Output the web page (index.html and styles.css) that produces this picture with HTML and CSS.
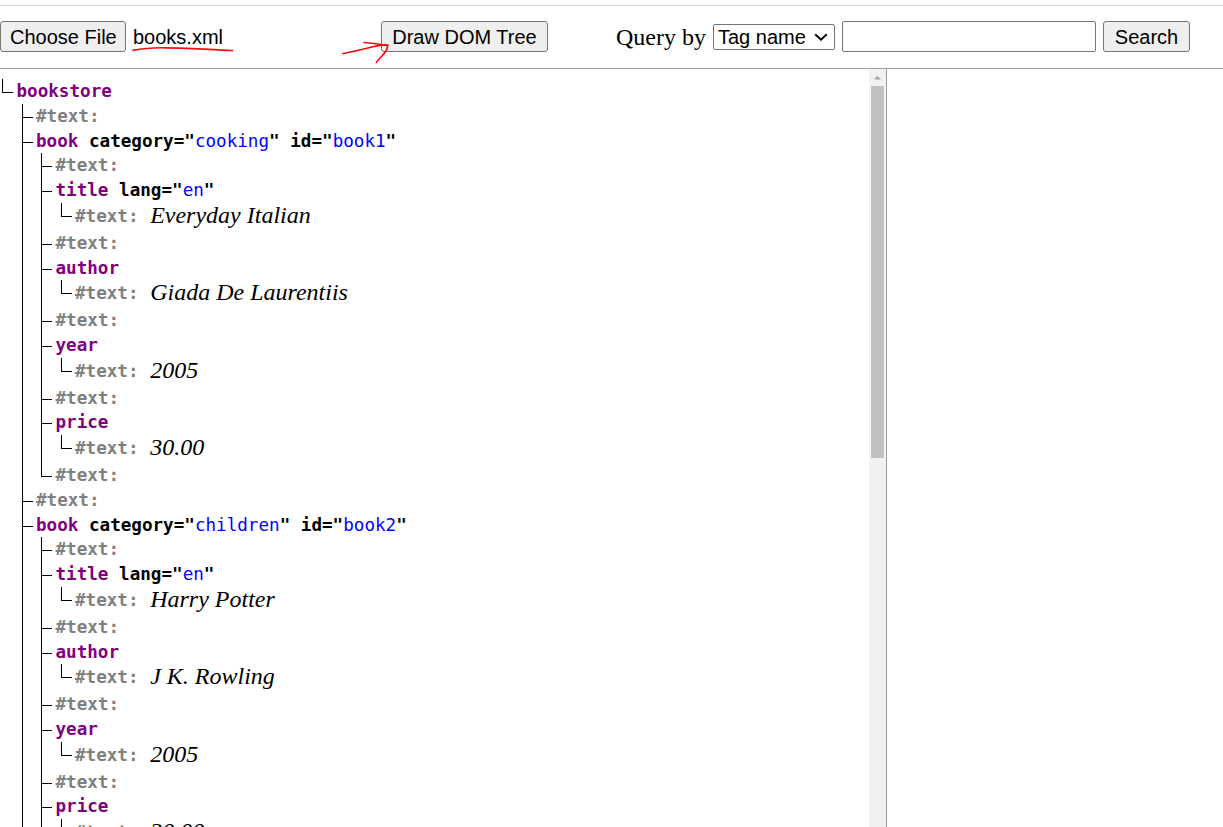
FILE: index.html
```html
<!DOCTYPE html>
<html lang="en">
<head>
<meta charset="utf-8">
<title>DOM Tree</title>
<link rel="stylesheet" href="styles.css">
</head>
<body>
<header class="toolbar">
  <div class="file-group">
    <button class="btn btn-file" type="button">Choose File</button>
    <span class="file-name">books.xml</span>
  </div>
  <button class="btn btn-draw" type="button">Draw DOM Tree</button>
  <label class="query-label" for="qtype">Query by</label>
  <select class="query-select" id="qtype"><option>Tag name</option></select>
  <input class="query-input" type="text" aria-label="query">
  <button class="btn btn-search" type="button">Search</button>
  <svg class="marks" width="400" height="70" viewBox="0 0 400 70" aria-hidden="true">
    <path d="M133 50.3 C 142 48.5, 152 47.6, 165 47.8 S 200 48.6, 214 49.6 S 228 50.4, 232.5 50.6" />
    <path d="M343 53.5 C 352 52, 362 49.5, 372 47 S 383 45, 388 45" />
    <path d="M364 42.5 C 372 43, 380 44, 387.5 45.5 C 388 49, 385 53, 381 57 S 377 61, 376.5 62.5" />
  </svg>
</header>

<main class="workspace">
  <section class="pane">
    <div class="tree-area">
      <ul class="tree root">
        <li class="last">
          <div class="row"><span class="lbl"><b class="t">bookstore</b></span></div>
          <ul class="tree">
            <li><div class="row"><span class="lbl"><b class="x">#text:</b></span></div></li>
            <li>
              <div class="row"><span class="lbl"><b class="t">book</b> <b class="a">category="</b><span class="v">cooking</span><b class="a">" id="</b><span class="v">book1</span><b class="a">"</b></span></div>
              <ul class="tree">
                <li><div class="row"><span class="lbl"><b class="x">#text:</b></span></div></li>
                <li>
                  <div class="row"><span class="lbl"><b class="t">title</b> <b class="a">lang="</b><span class="v">en</span><b class="a">"</b></span></div>
                  <ul class="tree"><li class="last"><div class="row val"><span class="lbl"><b class="x">#text:</b> <i class="s">Everyday Italian</i></span></div></li></ul>
                </li>
                <li><div class="row"><span class="lbl"><b class="x">#text:</b></span></div></li>
                <li>
                  <div class="row"><span class="lbl"><b class="t">author</b></span></div>
                  <ul class="tree"><li class="last"><div class="row val"><span class="lbl"><b class="x">#text:</b> <i class="s">Giada De Laurentiis</i></span></div></li></ul>
                </li>
                <li><div class="row"><span class="lbl"><b class="x">#text:</b></span></div></li>
                <li>
                  <div class="row"><span class="lbl"><b class="t">year</b></span></div>
                  <ul class="tree"><li class="last"><div class="row val"><span class="lbl"><b class="x">#text:</b> <i class="s">2005</i></span></div></li></ul>
                </li>
                <li><div class="row"><span class="lbl"><b class="x">#text:</b></span></div></li>
                <li>
                  <div class="row"><span class="lbl"><b class="t">price</b></span></div>
                  <ul class="tree"><li class="last"><div class="row val"><span class="lbl"><b class="x">#text:</b> <i class="s">30.00</i></span></div></li></ul>
                </li>
                <li class="last"><div class="row"><span class="lbl"><b class="x">#text:</b></span></div></li>
              </ul>
            </li>
            <li><div class="row"><span class="lbl"><b class="x">#text:</b></span></div></li>
            <li>
              <div class="row"><span class="lbl"><b class="t">book</b> <b class="a">category="</b><span class="v">children</span><b class="a">" id="</b><span class="v">book2</span><b class="a">"</b></span></div>
              <ul class="tree">
                <li><div class="row"><span class="lbl"><b class="x">#text:</b></span></div></li>
                <li>
                  <div class="row"><span class="lbl"><b class="t">title</b> <b class="a">lang="</b><span class="v">en</span><b class="a">"</b></span></div>
                  <ul class="tree"><li class="last"><div class="row val"><span class="lbl"><b class="x">#text:</b> <i class="s">Harry Potter</i></span></div></li></ul>
                </li>
                <li><div class="row"><span class="lbl"><b class="x">#text:</b></span></div></li>
                <li>
                  <div class="row"><span class="lbl"><b class="t">author</b></span></div>
                  <ul class="tree"><li class="last"><div class="row val"><span class="lbl"><b class="x">#text:</b> <i class="s">J K. Rowling</i></span></div></li></ul>
                </li>
                <li><div class="row"><span class="lbl"><b class="x">#text:</b></span></div></li>
                <li>
                  <div class="row"><span class="lbl"><b class="t">year</b></span></div>
                  <ul class="tree"><li class="last"><div class="row val"><span class="lbl"><b class="x">#text:</b> <i class="s">2005</i></span></div></li></ul>
                </li>
                <li><div class="row"><span class="lbl"><b class="x">#text:</b></span></div></li>
                <li>
                  <div class="row"><span class="lbl"><b class="t">price</b></span></div>
                  <ul class="tree"><li class="last"><div class="row val"><span class="lbl"><b class="x">#text:</b> <i class="s">30.00</i></span></div></li></ul>
                </li>
                <li class="last"><div class="row"><span class="lbl"><b class="x">#text:</b></span></div></li>
              </ul>
            </li>
            <li><div class="row"><span class="lbl"><b class="x">#text:</b></span></div></li>
            <li>
              <div class="row"><span class="lbl"><b class="t">book</b> <b class="a">category="</b><span class="v">web</span><b class="a">" id="</b><span class="v">book3</span><b class="a">"</b></span></div>
              <ul class="tree">
                <li><div class="row"><span class="lbl"><b class="x">#text:</b></span></div></li>
                <li>
                  <div class="row"><span class="lbl"><b class="t">title</b> <b class="a">lang="</b><span class="v">en</span><b class="a">"</b></span></div>
                  <ul class="tree"><li class="last"><div class="row val"><span class="lbl"><b class="x">#text:</b> <i class="s">XQuery Kick Start</i></span></div></li></ul>
                </li>
                <li class="last"><div class="row"><span class="lbl"><b class="x">#text:</b></span></div></li>
              </ul>
            </li>
            <li class="last"><div class="row"><span class="lbl"><b class="x">#text:</b></span></div></li>
          </ul>
        </li>
      </ul>
    </div>
    <div class="vscroll" aria-hidden="true">
      <div class="vs-up"><svg width="17" height="17" viewBox="0 0 17 17"><path d="M5 10.5 L8.5 7 L12 10.5 Z" fill="#a3a3a3"/></svg></div>
      <div class="vs-thumb"></div>
    </div>
  </section>
  <section class="result"></section>
</main>
</body>
</html>
```

FILE: styles.css
```css
html, body {
  margin: 0;
  padding: 0;
  background: #fff;
}

body {
  height: 100vh;
  overflow: hidden;
  display: flex;
  flex-direction: column;
  font-family: "Liberation Serif", "Times New Roman", serif;
  color: #000;
}

/* ---------- toolbar ---------- */
.toolbar {
  position: relative;
  flex: none;
  display: flex;
  align-items: center;
  margin-top: 5px;
  border-top: 1px solid #dadada;
  border-bottom: 1px solid #a0a0a0;
  padding: 15px 0 16px 0;
}

.btn {
  box-sizing: border-box;
  height: 31px;
  padding: 1px 9px 0;
  border: 1px solid #767676;
  border-radius: 3px;
  background: #efefef;
  color: #000;
  font: 20px "Liberation Sans", Arial, sans-serif;
  line-height: 29px;
  text-align: center;
  white-space: nowrap;
}

.btn-file { width: 126px; }
.btn-draw { width: 167px; }
.btn-search { width: 87px; margin-left: 7px; }

.file-group {
  display: flex;
  align-items: center;
  width: 381px;
  flex: none;
}

.file-name {
  margin-left: 7px;
  padding-top: 2px;
  font: 20px "Liberation Sans", Arial, sans-serif;
}

.query-label {
  margin-left: 68px;
  padding-top: 2px;
  font-size: 24px;
  white-space: nowrap;
}

.query-select {
  box-sizing: border-box;
  -webkit-appearance: none;
  appearance: none;
  margin-left: 7px;
  width: 122px;
  height: 26px;
  padding: 0 0 0 4px;
  border: 1px solid #767676;
  border-radius: 2px;
  background: #fff url("data:image/svg+xml,%3Csvg xmlns='http://www.w3.org/2000/svg' width='14' height='8' viewBox='0 0 14 8'%3E%3Cpath d='M1.2 1.2 L7 6.6 L12.8 1.2' fill='none' stroke='%23000' stroke-width='1.9'/%3E%3C/svg%3E") no-repeat right 6px center;
  color: #000;
  font: 20px "Liberation Sans", Arial, sans-serif;
}

.query-input {
  box-sizing: border-box;
  margin-left: 7px;
  width: 254px;
  height: 31px;
  border: 1px solid #767676;
  border-radius: 2px;
  padding: 0 4px;
  font: 20px "Liberation Sans", Arial, sans-serif;
}

.marks {
  position: absolute;
  left: 0;
  top: -6px;
  pointer-events: none;
  overflow: visible;
}

.marks path {
  fill: none;
  stroke: #f01010;
  stroke-width: 1.7;
  stroke-linecap: round;
  stroke-linejoin: round;
}

/* ---------- workspace ---------- */
.workspace {
  flex: 1;
  min-height: 0;
  display: flex;
}

.pane {
  flex: none;
  width: 886px;
  display: flex;
  border-right: 1px solid #999;
}

.tree-area {
  flex: 1;
  min-width: 0;
  overflow: hidden;
  padding-top: 10px;
}

.result {
  flex: 1;
}

/* scrollbar look-alike */
.vscroll {
  flex: none;
  width: 17px;
  background: #f1f1f1;
  display: flex;
  flex-direction: column;
}

.vs-up {
  height: 17px;
}

.vs-up svg {
  display: block;
}

.vs-thumb {
  height: 372px;
  margin: 0 2px;
  background: #c1c1c1;
}

/* ---------- tree ---------- */
.tree {
  list-style: none;
  margin: 0 0 0 18.5px;
  padding: 0;
}

.tree.root {
  margin-left: 2px;
}

.tree li {
  border-left: 1px solid #000;
}

.tree li.last {
  border-left-color: transparent;
}

.row {
  display: flex;
  line-height: 24.8px;
  font-family: "DejaVu Sans Mono", "Liberation Mono", monospace;
  font-size: 17.6px;
}

.row.val {
  padding-bottom: 2px;
}

.row::before {
  content: "";
  flex: none;
  align-self: flex-start;
  box-sizing: content-box;
  width: 10px;
  height: 13px;
  border-bottom: 1px solid #000;
  margin-right: 3.5px;
}

li.last > .row::before {
  border-left: 1px solid #000;
  margin-left: -1px;
}

.lbl {
  white-space: pre;
}

.row.val .lbl {
  padding-top: 1px;
}

.t { color: #800080; font-weight: bold; }
.a { color: #000; font-weight: bold; }
.v { color: #0000ff; font-weight: normal; }
.x { color: #808080; font-weight: bold; }

.s {
  font-family: "Liberation Serif", "Times New Roman", serif;
  font-size: 24px;
  font-style: italic;
  font-weight: normal;
  line-height: 20px;
  color: #000;
  margin-left: 1px;
  vertical-align: -1px;
}
```
